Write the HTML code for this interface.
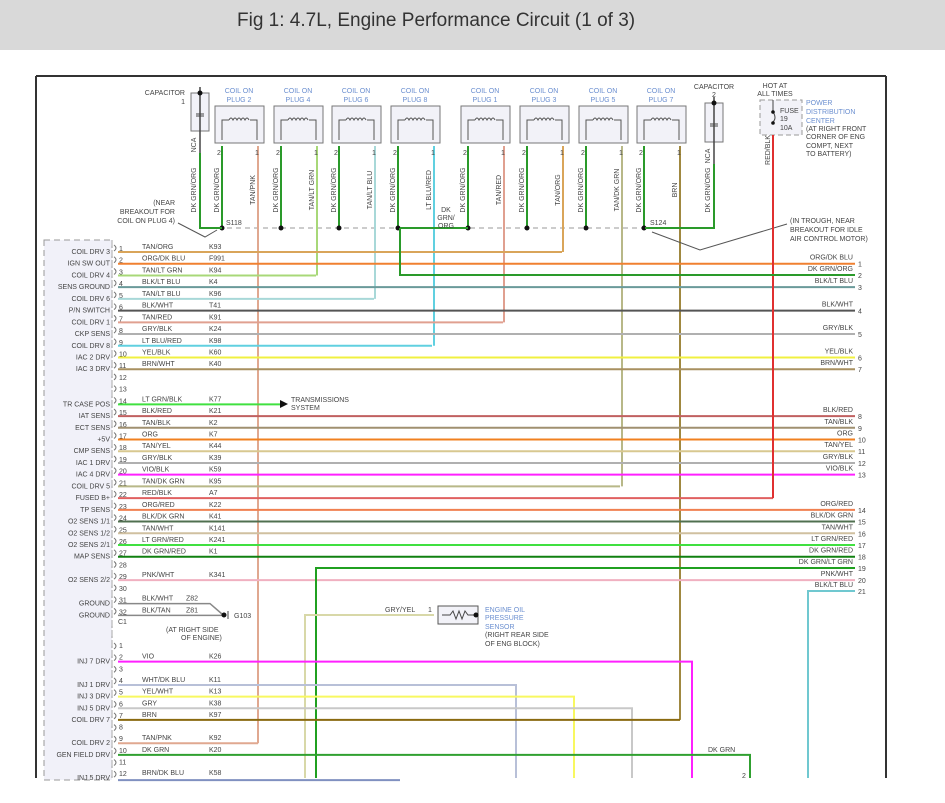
<!DOCTYPE html>
<html><head><meta charset="utf-8"><style>
html,body{margin:0;padding:0;background:#fff;width:945px;height:803px;overflow:hidden}
#hd{position:absolute;left:0;top:0;width:945px;height:50px;background:#d9d9d9}
#hd span{position:absolute;left:237px;top:10px;font:19px "Liberation Sans",sans-serif;color:#333}
svg{position:absolute;left:0;top:0}
text{font-family:"Liberation Sans",sans-serif;font-size:7px;fill:#444}
</style></head><body>
<div id="hd"><span>Fig 1: 4.7L, Engine Performance Circuit (1 of 3)</span></div>
<svg id="s" width="945" height="803" viewBox="0 0 945 803"></svg>
<script>
var o='';
function L(x1,y1,x2,y2,c,w,d){o+='<line x1="'+x1+'" y1="'+y1+'" x2="'+x2+'" y2="'+y2+'" stroke="'+c+'" stroke-width="'+(w||2)+'"'+(d?' stroke-dasharray="'+d+'"':'')+'/>';}
function P(pts,c,w){o+='<polyline points="'+pts+'" fill="none" stroke="'+c+'" stroke-width="'+(w||2)+'"/>';}
function T(x,y,t,a,c,extra){o+='<text x="'+x+'" y="'+y+'"'+(a?' text-anchor="'+a+'"':'')+(c?' style="fill:'+c+'"':'')+(extra||'')+'>'+t+'</text>';}
function V(x,y,t){o+='<text transform="translate('+x+','+y+') rotate(-90)" text-anchor="middle">'+t+'</text>';}
o+='<rect x="0" y="778" width="945" height="25" fill="#fff"/>';
L(36,76,886,76,'#333',2);L(36,76,36,778,'#333',2);L(886,76,886,778,'#333',2);
o+='<rect x="44" y="240" width="68" height="540" fill="#f1f1f9" stroke="#999" stroke-dasharray="6,4"/>';
L(112,240,112,778,'#aaa',1,'6,4');
function r1(n){return 252+(n-1)*11.72;}
function r2(n){return 650+(n-1)*11.65;}
var cx=[215,274,332,391,461,520,579,637],cn=[2,4,6,8,1,3,5,7];
var p1n=['TAN/PNK','TAN/LT GRN','TAN/LT BLU','LT BLU/RED','TAN/RED','TAN/ORG','TAN/DK GRN','BRN'];
var p1c=['#e0a890','#a8d878','#a8d8d8','#60d0e0','#e0a090','#d9a55a','#b8b888','#a08840'];
var p1y=[r2(9),r1(3),r1(5),r1(9),r1(7),r1(1),r1(21),r2(7)];
L(200,228,650,228,'#999',1,'5,4');
for(var i=0;i<8;i++){var x=cx[i];
 o+='<rect x="'+x+'" y="106" width="49" height="37" fill="#f2f2f8" stroke="#777"/>';
 T(x+24,93,'COIL ON','middle','#6b8fd0');T(x+24,102,'PLUG '+cn[i],'middle','#6b8fd0');
 P((x+7)+',140 '+(x+7)+',120 '+(x+14)+',120','#555',1);P((x+42)+',140 '+(x+42)+',120 '+(x+35)+',120','#555',1);
 o+='<path d="M'+(x+14)+' 120 q2 -4 4 0 q2 -4 4 0 q2 -4 4 0 q2 -4 4 0 q2 -4 4 0" fill="none" stroke="#555" stroke-width="1"/>';
 L(x+7,146,x+7,228,'#2a9a2a',2);
 var xp=x+43;L(xp,146,xp,p1y[i],p1c[i],2);
 T(x+2,155,'2');T(x+40,155,'1');
 V(x+4,190,'DK GRN/ORG');V(xp-3,190,p1n[i]);
 o+='<circle cx="'+(x+7)+'" cy="228" r="2.5" fill="#111"/>';
}
function cap(x,y1,y2){o+='<rect x="'+(x-9)+'" y="'+y1+'" width="18" height="'+(y2-y1)+'" fill="#f2f2f8" stroke="#777"/>';L(x,y1-6,x,y2+22,'#444',1.5);L(x-4,y1+21,x+4,y1+21,'#444',1);L(x-4,y1+23,x+4,y1+23,'#444',1);o+='<circle cx="'+x+'" cy="'+y1+'" r="2.5" fill="#111"/>';V(x-4,y2+14,'NCA');}
cap(200,93,131);T(185,95,'CAPACITOR','end');T(185,104,'1','end');
cap(714,103,142);T(714,89,'CAPACITOR','middle');T(714,97,'2','middle');
P('200,153 200,228 222,228','#2a9a2a',2);V(196,190,'DK GRN/ORG');
P('714,164 714,228 645,228','#2a9a2a',2);V(710,190,'DK GRN/ORG');
L(400,228,468,228,'#2a9a2a',2);
T(226,225,'S118');T(650,225,'S124');
T(446,212,'DK','middle');T(446,220,'GRN/','middle');T(446,228,'ORG','middle');
T(175,205,'(NEAR','end');T(175,214,'BREAKOUT FOR','end');T(175,223,'COIL ON PLUG 4)','end');
P('178,223 205,237 217,230','#555',1);
T(790,223,'(IN TROUGH, NEAR');T(790,232,'BREAKOUT FOR IDLE');T(790,241,'AIR CONTROL MOTOR)');
P('787,224 700,250 652,232','#555',1);
T(775,88,'HOT AT','middle');T(775,96,'ALL TIMES','middle');
o+='<rect x="760" y="100" width="42" height="35" fill="#f2f2f8" stroke="#999" stroke-dasharray="5,3"/>';
T(780,113,'FUSE');T(780,121,'19');T(780,130,'10A');
L(773,100,773,112,'#444',1);o+='<path d="M773 112 q4 6 0 10" fill="none" stroke="#444"/>';
o+='<circle cx="773" cy="112" r="1.8" fill="#111"/><circle cx="773" cy="123" r="1.8" fill="#111"/>';
T(806,105,'POWER','', '#6b8fd0');T(806,114,'DISTRIBUTION','','#6b8fd0');T(806,123,'CENTER','','#6b8fd0');
T(806,131,'(AT RIGHT FRONT');T(806,139,'CORNER OF ENG');T(806,148,'COMPT, NEXT');T(806,156,'TO BATTERY)');
V(770,150,'RED/BLK');
var w=[
[1,'#d9a55a','TAN/ORG','K93','',562],
[2,'#f08030','ORG/DK BLU','F991','',0,1,'ORG/DK BLU'],
[3,'#a8d878','TAN/LT GRN','K94','',316],
[4,'#6a9a9a','BLK/LT BLU','K4','',0,3,'BLK/LT BLU'],
[5,'#a8d8d8','TAN/LT BLU','K96','',374],
[6,'#555','BLK/WHT','T41','',0,4,'BLK/WHT'],
[7,'#e0a090','TAN/RED','K91','',503],
[8,'#b0b0b0','GRY/BLK','K24','',0,5,'GRY/BLK'],
[9,'#60d0e0','LT BLU/RED','K98','',432],
[10,'#f0f040','YEL/BLK','K60','',0,6,'YEL/BLK'],
[11,'#a89060','BRN/WHT','K40','',0,7,'BRN/WHT'],
[14,'#40e040','LT GRN/BLK','K77','',285],
[15,'#c06060','BLK/RED','K21','',0,8,'BLK/RED'],
[16,'#a09070','TAN/BLK','K2','',0,9,'TAN/BLK'],
[17,'#f08020','ORG','K7','',0,10,'ORG'],
[18,'#d8c890','TAN/YEL','K44','',0,11,'TAN/YEL'],
[19,'#b0b0b0','GRY/BLK','K39','',0,12,'GRY/BLK'],
[20,'#ff20ff','VIO/BLK','K59','',0,13,'VIO/BLK'],
[21,'#b8b888','TAN/DK GRN','K95','',620],
[22,'#e06060','RED/BLK','A7','',773],
[23,'#f08050','ORG/RED','K22','',0,14,'ORG/RED'],
[24,'#507050','BLK/DK GRN','K41','',0,15,'BLK/DK GRN'],
[25,'#d0c0a0','TAN/WHT','K141','',0,16,'TAN/WHT'],
[26,'#40e040','LT GRN/RED','K241','',0,17,'LT GRN/RED'],
[27,'#108010','DK GRN/RED','K1','',0,18,'DK GRN/RED'],
[29,'#f0b0c0','PNK/WHT','K341','',0,20,'PNK/WHT'],
[31,'#888','BLK/WHT','Z82','',210],
[32,'#888','BLK/TAN','Z81','',224]
];
var lab1={1:'COIL DRV 3',2:'IGN SW OUT',3:'COIL DRV 4',4:'SENS GROUND',5:'COIL DRV 6',6:'P/N SWITCH',7:'COIL DRV 1',8:'CKP SENS',9:'COIL DRV 8',10:'IAC 2 DRV',11:'IAC 3 DRV',14:'TR CASE POS',15:'IAT SENS',16:'ECT SENS',17:'+5V',18:'CMP SENS',19:'IAC 1 DRV',20:'IAC 4 DRV',21:'COIL DRV 5',22:'FUSED B+',23:'TP SENS',24:'O2 SENS 1/1',25:'O2 SENS 1/2',26:'O2 SENS 2/1',27:'MAP SENS',29:'O2 SENS 2/2',31:'GROUND',32:'GROUND'};
for(var n=1;n<=32;n++){var y=r1(n);T(119,y-1,String(n));o+='<path d="M114 '+(y-7)+' q4 3 0 6" fill="none" stroke="#777"/>';if(lab1[n])T(110,y+2,lab1[n],'end');}
T(118,624,'C1');
w.forEach(function(a){var y=r1(a[0]);T(142,y-3,a[2]);T(a[0]>=31?186:209,y-3,a[3]);
 if(a[6]){L(118,y,855,y,a[1],2);T(853,y-4,a[7],'end');T(858,y+3,String(a[6]));}
 else if(a[0]==14){L(118,y,280,y,a[1],2);o+='<path d="M280 400 L288 404 L280 408Z" fill="#111"/>';T(291,402,'TRANSMISSIONS');T(291,410,'SYSTEM');}
 else if(a[0]==31){P('118,'+y+' 210,'+y+' 222,614','#888',1.5);}
 else if(a[0]==32){L(118,y,222,y,'#888',1.5);}
 else {L(118,y,a[5],y,a[1],2);}
});
o+='<circle cx="224" cy="615" r="2.5" fill="#111"/>';L(228,611,228,619,'#444',1);T(234,618,'G103');
T(166,632,'(AT RIGHT SIDE');T(181,640,'OF ENGINE)');
L(773,135,773,r1(22),'#e03030',2);
P('400,228 400,275 855,275','#2a9a2a',2);T(853,271,'DK GRN/ORG','end');T(858,278,'2');
P('316,778 316,568 855,568','#20a020',2);T(853,564,'DK GRN/LT GRN','end');T(858,571,'19');
P('808,778 808,591 855,591','#70c8d0',2);T(853,587,'BLK/LT BLU','end');T(858,594,'21');
o+='<rect x="438" y="606" width="40" height="18" fill="#f2f2f8" stroke="#555"/>';
P('442,615 450,615 453,611 456,619 459,611 462,619 465,611 468,615 476,615','#444',1);
o+='<circle cx="476" cy="615" r="2.5" fill="#111"/>';
T(385,612,'GRY/YEL');T(428,612,'1');
P('434,615 305,615 305,778','#d8d8a8',2);
T(485,612,'ENGINE OIL','','#6b8fd0');T(485,620,'PRESSURE','','#6b8fd0');T(485,629,'SENSOR','','#6b8fd0');T(485,637,'(RIGHT REAR SIDE');T(485,646,'OF ENG BLOCK)');
var lab2={2:'INJ 7 DRV',4:'INJ 1 DRV',5:'INJ 3 DRV',6:'INJ 5 DRV',7:'COIL DRV 7',9:'COIL DRV 2',10:'GEN FIELD DRV',12:'INJ 5 DRV'};
for(var n=1;n<=12;n++){var y=r2(n);T(119,y-2,String(n));o+='<path d="M114 '+(y-7)+' q4 3 0 6" fill="none" stroke="#777"/>';if(lab2[n])T(110,y+2,lab2[n],'end');}
var w2=[[2,'#ff20ff','VIO','K26','692,778'],[4,'#b8c0d8','WHT/DK BLU','K11','516,778'],[5,'#f8f860','YEL/WHT','K13','574,778'],[6,'#c8c8c8','GRY','K38','632,778'],[7,'#8a6a10','BRN','K97',''],[9,'#e0a890','TAN/PNK','K92',''],[10,'#30a030','DK GRN','K20','750,778'],[12,'#8090c0','BRN/DK BLU','K58','']];
w2.forEach(function(a){var y=r2(a[0]);T(142,y-3,a[2]);T(209,y-3,a[3]);
 if(a[0]==7){L(118,y,680,y,a[1],2);}
 else if(a[0]==9){L(118,y,258,y,a[1],2);}
 else if(a[0]==12){L(118,y+2,400,y+2,a[1],2);}
 else {var xx=+a[4].split(',')[0];P('118,'+y+' '+xx+','+y+' '+a[4],a[1],2);}
});
T(708,752,'DK GRN');T(742,778,'2');
document.getElementById('s').innerHTML=o;
</script>
</body></html>
